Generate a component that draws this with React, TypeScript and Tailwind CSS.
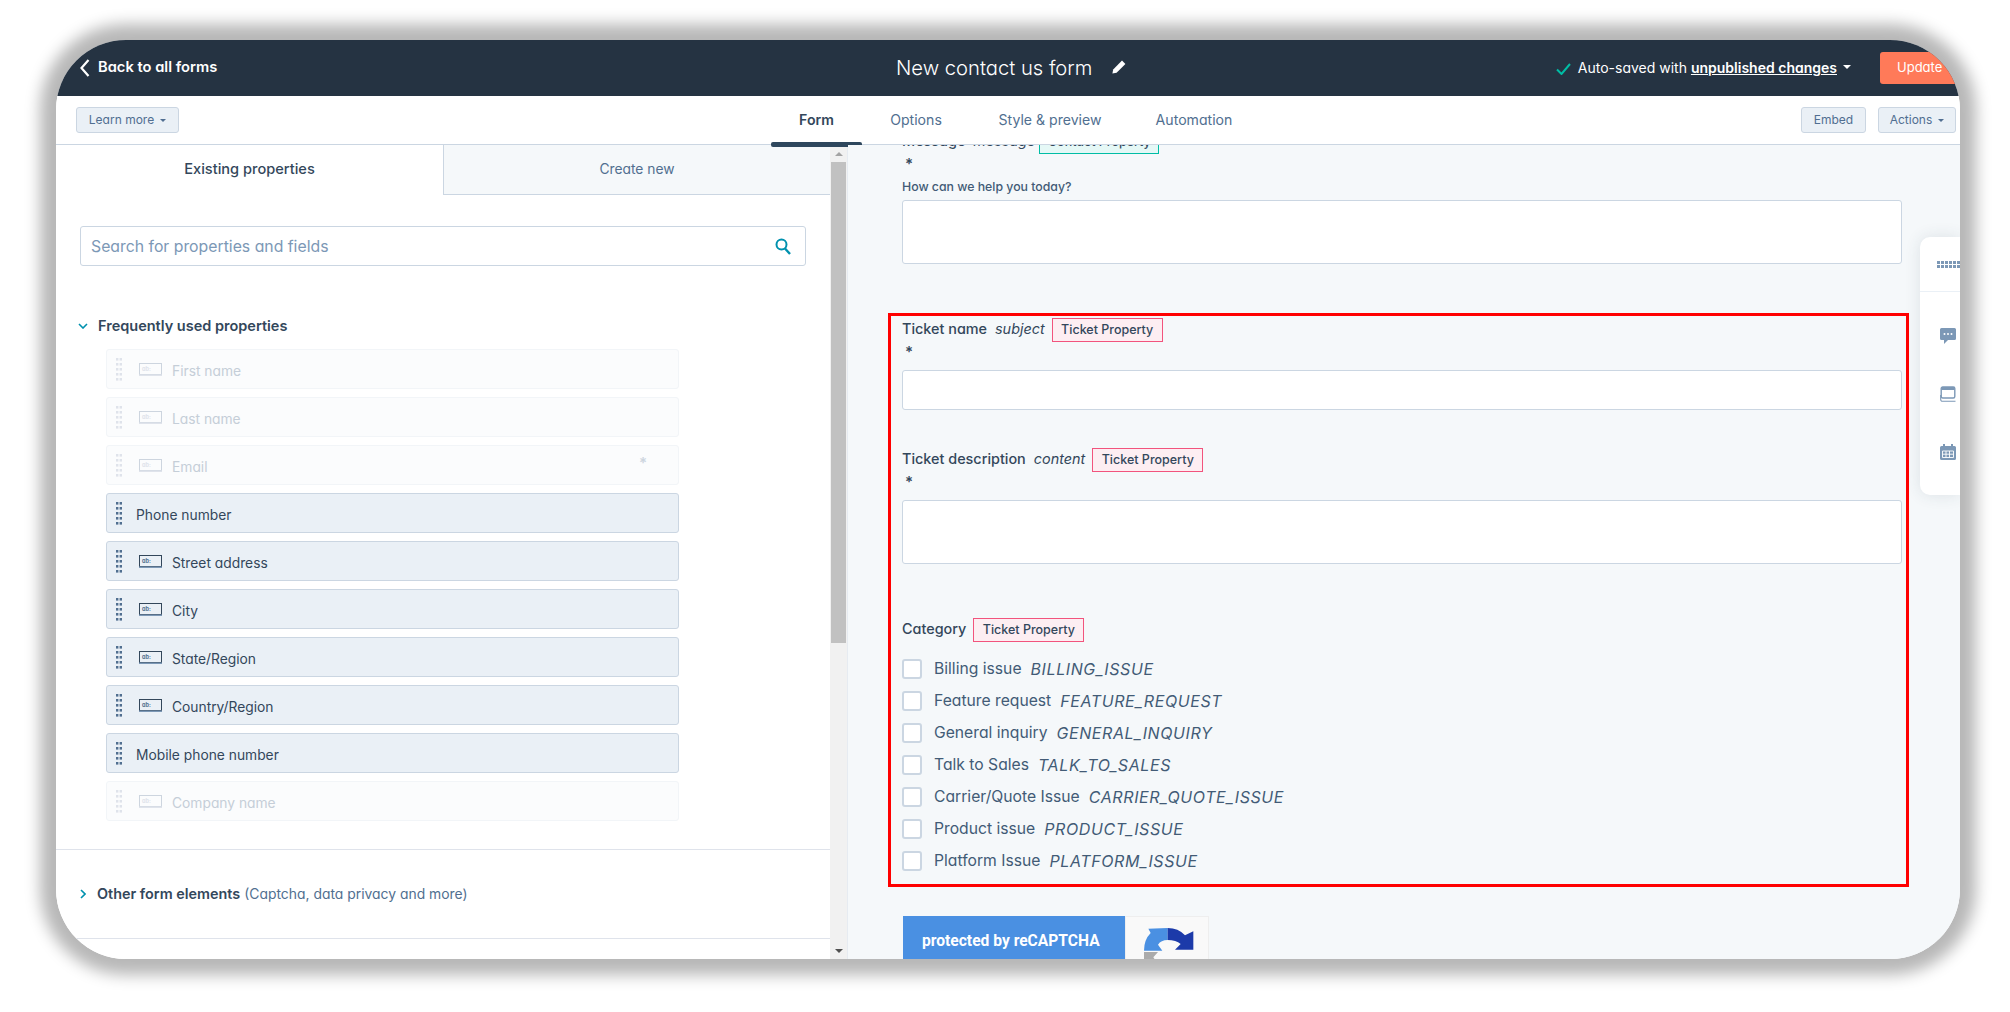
import React from 'react';

const properties = [
  { label: 'First name', disabled: true, icon: true },
  { label: 'Last name', disabled: true, icon: true },
  { label: 'Email', disabled: true, icon: true, required: true },
  { label: 'Phone number', disabled: false, icon: false },
  { label: 'Street address', disabled: false, icon: true },
  { label: 'City', disabled: false, icon: true },
  { label: 'State/Region', disabled: false, icon: true },
  { label: 'Country/Region', disabled: false, icon: true },
  { label: 'Mobile phone number', disabled: false, icon: false },
  { label: 'Company name', disabled: true, icon: true },
];

const categories = [
  ['Billing issue', 'BILLING_ISSUE'],
  ['Feature request', 'FEATURE_REQUEST'],
  ['General inquiry', 'GENERAL_INQUIRY'],
  ['Talk to Sales', 'TALK_TO_SALES'],
  ['Carrier/Quote Issue', 'CARRIER_QUOTE_ISSUE'],
  ['Product issue', 'PRODUCT_ISSUE'],
  ['Platform Issue', 'PLATFORM_ISSUE'],
];

function Caret({ className }: { className: string }) {
  return (
    <svg viewBox="0 0 8 4" className={className}>
      <path d="M0 0h8L4 4z" fill="currentColor" />
    </svg>
  );
}

function Grip({ disabled }: { disabled: boolean }) {
  const dots = [0, 1, 2, 3, 4];
  return (
    <svg viewBox="0 0 6 23" className="h-[23px] w-[6px] shrink-0">
      {dots.map((d) => (
        <g key={d} fill={disabled ? '#dfe3eb' : '#516f90'}>
          <rect x="0" y={d * 5} width="2.4" height="2.6" />
          <rect x="3.6" y={d * 5} width="2.4" height="2.6" />
        </g>
      ))}
    </svg>
  );
}

function FieldIcon({ disabled }: { disabled: boolean }) {
  const color = disabled ? '#cdd5df' : '#33475b';
  return (
    <svg viewBox="0 0 23 13" className="h-[13px] w-[23px] shrink-0">
      <rect x="0.5" y="0.5" width="22" height="11" fill="none" stroke={color} />
      <rect x="0" y="11.5" width="23" height="1.5" fill={disabled ? '#dfe3eb' : '#7c98b6'} />
      <text x="3" y="8" fontSize="5.5" fontWeight="700" fill={disabled ? '#dfe3eb' : '#516f90'}>
        ab:
      </text>
    </svg>
  );
}

function PropertyRow({ label, disabled, icon, required }: { label: string; disabled: boolean; icon: boolean; required?: boolean }) {
  return (
    <div
      className={
        disabled
          ? 'flex h-10 items-center rounded-[3px] border border-[#f2f5f8] bg-[#fbfcfd] pl-[9px] text-[13.8px] text-[#c5ced8]'
          : 'flex h-10 items-center rounded-[3px] border border-[#cbd6e2] bg-[#eaf0f6] pl-[9px] text-[13.8px] text-[#33475b]'
      }
    >
      <Grip disabled={disabled} />
      {icon ? (
        <>
          <span className="ml-[17px]">
            <FieldIcon disabled={disabled} />
          </span>
          <span className="ml-[10px] mt-1">{label}</span>
        </>
      ) : (
        <span className="ml-[14px] mt-1">{label}</span>
      )}
      {required && <span className="ml-auto mr-[31px] -mt-[4px] text-[15px] font-semibold text-[#cdd5df]">*</span>}
    </div>
  );
}

function PropertyBadge({ label, teal }: { label: string; teal?: boolean }) {
  return (
    <span
      className={
        teal
          ? 'flex h-6 w-[120px] items-center justify-center border border-[#00bda5] bg-[#e5f8f6] text-[12.5px] font-medium text-[#33475b]'
          : 'flex h-6 w-[111px] items-center justify-center border border-[#f2547d] bg-[#fdeef2] text-[12.5px] font-medium text-[#33475b]'
      }
    >
      {label}
    </span>
  );
}

function FieldLabel({ name, internal, badge, teal }: { name: string; internal?: string; badge: string; teal?: boolean }) {
  return (
    <div className="flex h-6 items-center text-[14.4px] text-[#33475b]">
      <span className="-mt-[2px] font-medium">{name}</span>
      {internal && <span className="-mt-[2px] ml-2 italic">{internal}</span>}
      <span className={teal ? 'ml-1' : 'ml-[7px]'}>
        <PropertyBadge label={badge} teal={teal} />
      </span>
    </div>
  );
}

function Asterisk() {
  return <div className="flex h-5 items-center pl-[3px] text-[15px] font-semibold text-[#33475b]">*</div>;
}

function HeaderButton({ label, caret, className }: { label: string; caret?: boolean; className: string }) {
  return (
    <button className={`flex h-[26px] items-center justify-center gap-[6px] whitespace-nowrap rounded-[3px] border border-[#cbd6e2] bg-[#eaf0f6] text-[12px] text-[#506e91] ${className}`}>
      {label}
      {caret && <Caret className="h-[3px] w-[6px]" />}
    </button>
  );
}

function Tab({ label, active, className }: { label: string; active?: boolean; className: string }) {
  return (
    <div className={`relative flex h-full items-center justify-center whitespace-nowrap text-[14.1px] ${active ? 'font-semibold text-[#33475b]' : 'text-[#516f90]'} ${className}`}>
      <span>{label}</span>
      {active && <span className="absolute bottom-[-3px] left-0 h-[5px] w-full rounded-[2px] bg-[#2e475d]" />}
    </div>
  );
}

export default function App() {
  return (
    <div className="h-[1012px] w-[2010px] overflow-hidden bg-white pl-14 pt-10 font-['Inter',sans-serif] [font-feature-settings:'cv11']">
      <div className="flex h-[919px] w-[1904px] flex-col overflow-hidden rounded-[70px] bg-white shadow-[0_0_15px_16px_#b8b8b8]">
        {/* top bar */}
        <header className="flex h-14 shrink-0 items-center bg-[#253342] text-white">
          <div className="flex w-[840px] shrink-0 items-center pl-6">
            <svg viewBox="0 0 10 18" className="h-[18px] w-[10px]">
              <path d="M8.5 1 1.5 9l7 8" fill="none" stroke="white" strokeWidth="2.2" />
            </svg>
            <span className="-mt-[1px] ml-2 text-[14.7px] font-semibold">Back to all forms</span>
          </div>
          <span className="text-[20.2px] font-light">New contact us form</span>
          <svg viewBox="0 0 14 14" className="ml-5 -mt-[2px] h-[14px] w-[14px]">
            <path d="M10 .6 13.4 4 4.6 12.8.4 13.6 1.2 9.4z" fill="white" />
          </svg>
          <div className="ml-auto -mr-[5px] flex items-center">
            <svg viewBox="0 0 15 12" className="mt-[2px] h-[12px] w-[15px]">
              <path d="M1 6.5 5.5 11 14 1" fill="none" stroke="#00bda5" strokeWidth="2" />
            </svg>
            <span className="-mt-[2px] ml-[7px] text-[14px]">
              Auto-saved with <span className="font-semibold underline">unpublished changes</span>
            </span>
            <Caret className="-mt-[2px] ml-[6px] h-1 w-2" />
            <button className="ml-[29px] flex h-8 w-[85px] items-center rounded-[3px] bg-[#ff7a59] pl-[17px] text-[13px]">Update</button>
          </div>
        </header>

        {/* tab bar */}
        <div className="flex h-[49px] shrink-0 items-center border-b border-[#cbd6e2] bg-white">
          <HeaderButton label="Learn more" caret className="ml-[20px] w-[103px]" />
          <div className="ml-[592px] flex h-full">
            <Tab label="Form" active className="w-[91px]" />
            <Tab label="Options" className="ml-[28px] w-[52px]" />
            <Tab label="Style & preview" className="ml-[60px] w-[96px]" />
            <Tab label="Automation" className="ml-[57px] w-[78px]" />
          </div>
          <HeaderButton label="Embed" className="ml-auto w-[65px]" />
          <HeaderButton label="Actions" caret className="ml-3 mr-1 w-[78px]" />
        </div>

        <div className="flex min-h-0 flex-1">
          {/* properties panel */}
          <div className="w-[774px] shrink-0 overflow-hidden bg-white">
            <div className="flex h-[50px]">
              <div className="flex w-[387px] items-center justify-center text-[14.6px] font-medium text-[#33475b]">Existing properties</div>
              <div className="flex w-[387px] items-center justify-center border-b border-l border-[#cbd6e2] bg-[#f5f8fa] text-[13.8px] text-[#516f90]">Create new</div>
            </div>
            <div className="ml-6 mt-[31px] flex h-10 w-[726px] items-center justify-between rounded-[3px] border border-[#cbd6e2] bg-white pl-[10px] pr-[14px] text-[15.8px] text-[#7c98b6]">
              <span className="mt-[2px]">Search for properties and fields</span>
              <svg viewBox="0 0 16 17" className="h-[17px] w-4">
                <circle cx="6.5" cy="6.5" r="5" fill="none" stroke="#0091ae" strokeWidth="2" />
                <path d="m10 10.5 5 5.5" stroke="#0091ae" strokeWidth="2.4" />
              </svg>
            </div>
            <div className="ml-[22px] mt-[50px] flex h-5 items-center text-[14.5px] font-semibold text-[#33475b]">
              <svg viewBox="0 0 10 6" className="h-[6px] w-[10px]">
                <path d="m1 1 4 4 4-4" fill="none" stroke="#0091ae" strokeWidth="1.6" />
              </svg>
              <span className="ml-[10px]">Frequently used properties</span>
            </div>
            <div className="ml-[50px] mt-[13px] flex w-[573px] flex-col gap-2">
              {properties.map((p) => (
                <PropertyRow key={p.label} {...p} />
              ))}
            </div>
            <div className="mt-7 border-t border-[#dfe3eb]" />
            <div className="ml-6 mt-[34px] flex h-5 items-center text-[14.4px] text-[#33475b]">
              <svg viewBox="0 0 6 10" className="h-[10px] w-[6px]">
                <path d="m1 1 4 4-4 4" fill="none" stroke="#0091ae" strokeWidth="1.6" />
              </svg>
              <span className="ml-[11px] font-semibold">Other form elements</span>
              <span className="ml-1 text-[13.9px] text-[#516f90]">(Captcha, data privacy and more)</span>
            </div>
            <div className="mt-[34px] border-t border-[#dfe3eb]" />
          </div>

          {/* scrollbar */}
          <div className="flex w-[18px] shrink-0 flex-col items-center border-r border-[#e6ebf1] bg-[#f1f1f1]">
            <div className="flex h-[17px] items-center justify-center">
              <Caret className="h-1 w-2 rotate-180 text-[#a3a3a3]" />
            </div>
            <div className="h-[481px] w-[15px] bg-[#c1c1c1]" />
            <div className="mt-auto flex h-[17px] items-center justify-center">
              <Caret className="h-1 w-2 text-[#505050]" />
            </div>
          </div>

          {/* form preview */}
          <div className="relative min-w-0 flex-1 overflow-hidden bg-[#f5f8fa]">
            <div className="-mt-[15px] pl-[54px]">
              <FieldLabel name="Message" internal="message" badge="Contact Property" teal />
              <Asterisk />
              <div className="mt-[5px] text-[12.3px] font-medium leading-4 text-[#425b76]">How can we help you today?</div>
              <div className="mt-[5px] h-16 w-[1000px] rounded-[3px] border border-[#cbd6e2] bg-white" />
            </div>

            <div className="ml-10 mt-[49px] h-[574px] w-[1021px] border-[3px] border-[#ff0000] pl-[11px] pt-[2px]">
              <FieldLabel name="Ticket name" internal="subject" badge="Ticket Property" />
              <Asterisk />
              <div className="mt-2 h-10 w-[1000px] rounded-[3px] border border-[#cbd6e2] bg-white" />
              <div className="mt-[38px]">
                <FieldLabel name="Ticket description" internal="content" badge="Ticket Property" />
              </div>
              <Asterisk />
              <div className="mt-2 h-16 w-[1000px] rounded-[3px] border border-[#cbd6e2] bg-white" />
              <div className="mt-[54px]">
                <FieldLabel name="Category" badge="Ticket Property" />
              </div>
              <div className="mt-[17px] flex flex-col gap-3">
                {categories.map(([name, value]) => (
                  <div key={value} className="flex h-5 items-center text-[15.7px] text-[#425b76]">
                    <span className="h-5 w-5 shrink-0 rounded-[3px] border-2 border-[#cbd6e2] bg-white" />
                    <span className="ml-3">{name}</span>
                    <span className="ml-[9px] text-[16px] italic tracking-[0.6px]">{value}</span>
                  </div>
                ))}
              </div>
            </div>

            <div className="ml-[55px] mt-[29px] flex h-[60px] w-[306px]">
              <div className="flex w-[222px] items-start bg-[#4a90e2] pl-[19px] pt-[14px] font-['Roboto',sans-serif] text-[15.6px] font-bold leading-[22px] text-white">protected by reCAPTCHA</div>
              <div className="flex-1 border border-[#eeeeee] bg-[#f9f9f9] pl-[18px] pt-[11px]">
                <svg viewBox="42 40 150 150" className="h-[50px] w-[50px]">
                  <path d="M113 40V76Q93 76 84 90L97 108H42Q42 75 62 55L55 42Z" fill="#4a90e2" />
                  <path d="M113 40Q145 40 165 62L190 50V105H135L152 88Q138 76 113 76Z" fill="#1c3aa9" />
                  <path d="M42 112H84L70 128L80 142H42Z" fill="#ababab" />
                </svg>
              </div>
            </div>

            {/* floating rail */}
            <div className="absolute right-0 top-[92px] h-[258px] w-10 rounded-l-[10px] bg-white shadow-[0_0_16px_rgba(45,62,80,0.12)]">
              <div className="flex h-[55px] items-center border-b border-[#eaf0f6] pl-[17px]">
                <svg viewBox="0 0 24 7" className="h-[7px] w-6 shrink-0">
                  {[0, 1, 2, 3, 4, 5].map((i) => (
                    <g key={i} fill="#7c98b6">
                      <rect x={i * 4} y="0" width="3" height="3" />
                      <rect x={i * 4} y="4" width="3" height="3" />
                    </g>
                  ))}
                </svg>
              </div>
              <div className="flex flex-col gap-[42px] pl-5 pt-[36px]">
                <svg viewBox="0 0 16 16" className="h-4 w-4">
                  <path d="M1.5 0h13A1.5 1.5 0 0 1 16 1.5v9a1.5 1.5 0 0 1-1.5 1.5H8l-4 4v-4H1.5A1.5 1.5 0 0 1 0 10.5v-9A1.5 1.5 0 0 1 1.5 0z" fill="#7c98b6" />
                  <circle cx="4.5" cy="6" r="1" fill="white" />
                  <circle cx="8" cy="6" r="1" fill="white" />
                  <circle cx="11.5" cy="6" r="1" fill="white" />
                </svg>
                <svg viewBox="0 0 16 16" className="h-4 w-4">
                  <path d="M1.5 1h13v3h-13z" fill="#7c98b6" />
                  <rect x="1.2" y="1" width="13.6" height="11" rx="1.5" fill="none" stroke="#7c98b6" strokeWidth="1.4" />
                  <path d="M.7 9v4.500a1.800 1.800 0 0 0 1.800 1.800h13" fill="none" stroke="#7c98b6" strokeWidth="1.1" />
                </svg>
                <svg viewBox="0 0 16 16" className="h-4 w-4">
                  <path d="M3 0h2v2h6V0h2v2h1.5A1.5 1.5 0 0 1 16 3.5v11a1.500 1.500 0 0 1-1.500 1.500h-13A1.500 1.500 0 0 1 0 14.500v-11A1.500 1.500 0 0 1 1.500 2H3z" fill="#7c98b6" />
                  <path d="M2.5 7h11v6.500h-11zM6 7v6.500M9.500 7v6.500M2.500 10.200h11" fill="none" stroke="white" strokeWidth="0.9" />
                </svg>
              </div>
            </div>
          </div>
        </div>
      </div>
    </div>
  );
}
